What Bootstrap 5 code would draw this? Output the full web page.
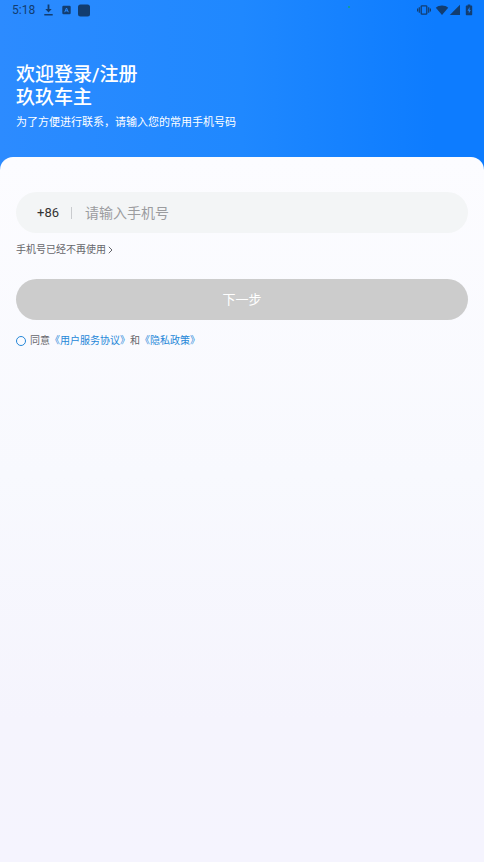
<!DOCTYPE html>
<html lang="zh-CN">
<head>
<meta charset="utf-8">
<meta name="viewport" content="width=device-width, initial-scale=1">
<title>欢迎登录/注册</title>
<link href="https://cdn.jsdelivr.net/npm/bootstrap@5.3.0/dist/css/bootstrap.min.css" rel="stylesheet">
<style>
body { font-family: Roboto, "Noto Sans CJK SC", sans-serif; background: linear-gradient(90deg, #2c8bff 0%, #1f88ff 50%, #0d7cff 90%); font-size: 10px; line-height: 16px; color: #66666b; }
.status-bar { height: 20px; padding: 0 11px 0 12px; color: #123d70; font-size: 12px; }
.status-bar svg { display: block; }
.status-left { gap: 7px; }
.cam-dot { width: 2px; height: 2px; top: 6px; left: 72%; background: #12a678; }
.hero { padding: 43px 16px 26px; }
.hero-title { font-size: 19px; line-height: 23px; font-weight: 500; }
.hero-note { font-size: 11px; line-height: 16px; margin-top: 6px; }
.sheet { border-radius: 13px 13px 0 0; padding: 35px 16px 16px; background: linear-gradient(180deg, #fcfcff 0%, #f8f9fe 45%, #f5f4fd 80%, #f5f4fe 100%); }
.phone-box { height: 41px; background: #f3f5f6; padding: 0 21px; }
.phone-code { font-size: 13px; color: #333; }
.phone-sep { width: 1px; height: 12px; background: #c9cbce; margin: 0 13px 0 12px; }
.phone-input, .phone-input:focus { font-size: 14px; line-height: 20px; color: #333; background: transparent; box-shadow: none; }
.phone-input::placeholder { color: #9b9c9f; opacity: 1; }
.lost-link { color: #66666b; margin-top: 9px; gap: 2px; }
.next-btn, .next-btn:disabled { height: 41px; margin-top: 21px; background: #ccc; color: #fff; font-size: 13px; line-height: 20px; opacity: 1; }
.agree-row { margin-top: 13px; gap: 4px; }
.agree-row .form-check-input { width: 10px; height: 10px; border: 1px solid #2587d8; background-color: transparent; }
.agree-row .form-check-input:checked { background-color: #2587d8; }
.agree-row a { color: #2587d8; }
</style>
</head>
<body class="min-vh-100 d-flex flex-column">
<div class="status-bar d-flex align-items-center justify-content-between position-relative">
  <div class="status-left d-flex align-items-center">
    <span>5:18</span>
    <svg width="13" height="14" viewBox="0 0 13 14" fill="currentColor" aria-hidden="true"><path d="M5.6 1.500h1.800v4.600h2.300L6.500 9.500 3.300 6.100h2.300zM2.300 11h8.400v1.500H2.300z"/></svg>
    <svg width="9" height="10" viewBox="0 0 9 10" aria-hidden="true"><rect x=".3" y=".8" width="8.400" height="8.400" rx="1.200" fill="currentColor"/><path d="M2.700 7.200 4.500 3l1.800 4.200M3.300 5.800h2.400" fill="none" stroke="#2689ff"/></svg>
    <svg width="12" height="13" viewBox="0 0 12 13" fill="currentColor" aria-hidden="true"><rect y=".5" width="12" height="12" rx="2.500"/></svg>
  </div>
  <span class="cam-dot position-absolute rounded-circle"></span>
  <div class="d-flex align-items-center">
    <svg class="me-1" width="14" height="12" viewBox="0 0 14 12" fill="none" stroke="currentColor" aria-hidden="true"><rect x="4.200" y="1.800" width="5.600" height="8.400" rx=".8" stroke-width="1.300"/><path d="M2.300 3.300v5.400M11.700 3.300v5.400M.6 4.600v2.800M13.400 4.600v2.800" stroke-width="1.200"/></svg>
    <svg width="14" height="12" viewBox="0 0 14 12" fill="currentColor" aria-hidden="true"><path d="M7 11 .8 3.700C4 .8 10 .8 13.200 3.700z"/></svg>
    <svg class="me-1" width="12" height="12" viewBox="0 0 12 12" fill="currentColor" aria-hidden="true"><path d="M11 .8V11H.8z"/></svg>
    <svg width="8" height="12" viewBox="0 0 8 12" aria-hidden="true"><path d="M2.700.6h2.600v1H6.500q.7 0 .7.7v8.200q0 .7-.7.7h-5q-.7 0-.7-.7V2.300q0-.7.7-.7h1.200z" fill="currentColor"/><path d="M4.600 3 2.500 6.700h1.300V9.500l2-3.600H4.600z" fill="#1681ff"/></svg>
  </div>
</div>
<header class="hero text-white">
  <h1 class="hero-title mb-0">欢迎登录/注册<br>玖玖车主</h1>
  <p class="hero-note mb-0">为了方便进行联系，请输入您的常用手机号码</p>
</header>
<main class="sheet flex-grow-1">
  <form>
    <div class="phone-box rounded-pill d-flex align-items-center">
      <label class="phone-code" for="phone">+86</label>
      <span class="phone-sep"></span>
      <input class="phone-input form-control border-0 p-0" id="phone" type="tel" placeholder="请输入手机号">
    </div>
    <a class="lost-link d-inline-flex align-items-center text-decoration-none" href="#">手机号已经不再使用
      <svg width="5" height="8" viewBox="0 0 5 8" fill="none" stroke="currentColor" aria-hidden="true"><path d="M.8.8 4 4 .8 7.200"/></svg>
    </a>
    <button class="next-btn btn border-0 rounded-pill w-100 d-block p-0" type="submit" disabled>下一步</button>
    <div class="agree-row d-flex align-items-center">
      <input class="form-check-input rounded-circle m-0 flex-shrink-0" type="checkbox" id="agree">
      <div><label for="agree">同意</label><a class="text-decoration-none" href="#">《用户服务协议》</a>和<a class="text-decoration-none" href="#">《隐私政策》</a></div>
    </div>
  </form>
</main>
<script src="https://cdn.jsdelivr.net/npm/bootstrap@5.3.0/dist/js/bootstrap.bundle.min.js"></script>
</body>
</html>
